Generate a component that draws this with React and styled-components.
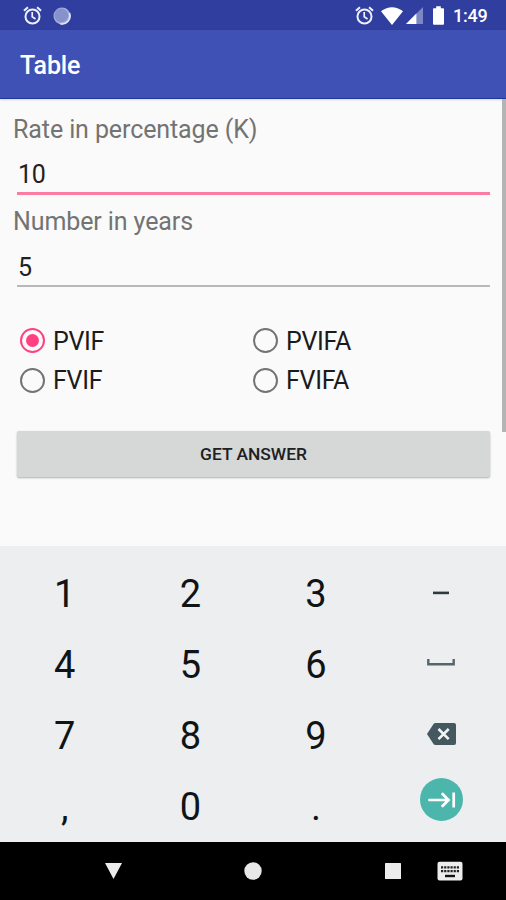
import React, { useState } from 'react';
import styled, { createGlobalStyle } from 'styled-components';

// --- STYLES ---

const GlobalStyle = createGlobalStyle`
  * { box-sizing: border-box; }

  body {
    margin: 0;
    background: #fafafa;
    font-family: Roboto, "Liberation Sans", sans-serif;
  }

  svg { display: block; flex: none; }
`;

const Screen = styled.div`
  width: 506px;
  height: 900px;
  display: flex;
  flex-direction: column;
  overflow: hidden;
  background: #fafafa;
`;

const StatusBar = styled.header`
  height: 30px;
  flex: none;
  display: flex;
  align-items: center;
  justify-content: space-between;
  padding: 1px 18px 0 23px;
  background: #303f9f;
`;

const StatusGroup = styled.div`
  display: flex;
  align-items: center;
`;

const StatusIcon = styled.span`
  margin-right: ${props => props.$space}px;
`;

const Clock = styled.span`
  width: 35px;
  font-size: 18px;
  line-height: 30px;
  letter-spacing: -0.2px;
  font-weight: 500;
  color: #fff;
  white-space: nowrap;
`;

const AppBar = styled.div`
  height: 69px;
  flex: none;
  display: flex;
  align-items: center;
  padding: 4px 20px 0;
  background: #3f51b5;
  border-bottom: 1px solid #1c389f;
  box-shadow: 0 1px 2px rgba(0, 0, 0, 0.15);
`;

const Title = styled.h1`
  margin: 0;
  font-size: 25px;
  line-height: 30px;
  letter-spacing: -0.1px;
  font-weight: 500;
  color: #fff;
`;

const Content = styled.main`
  height: 447px;
  flex: none;
  display: flex;
  align-items: flex-start;
`;

const Form = styled.form`
  width: 502px;
  padding: 16px 12px 0 13px;
`;

const ScrollThumb = styled.div`
  width: 4px;
  height: 333px;
  background: #b4b4b4;
`;

const Field = styled.label`
  display: block;
  height: ${props => props.$height}px;
`;

const FieldName = styled.span`
  display: block;
  font-size: 25px;
  line-height: 30px;
  letter-spacing: -0.1px;
  color: #737373;
`;

const Input = styled.input`
  display: block;
  width: 473px;
  height: 50px;
  margin-left: 4px;
  padding: 12px 1px 0;
  border: 0;
  border-bottom: ${props => (props.$active ? '3px solid #fb7ba2' : '2px solid #b9b9b9')};
  outline: 0;
  background: transparent;
  font-family: inherit;
  font-size: 25px;
  letter-spacing: -0.2px;
  color: #212121;
`;

const RadioGrid = styled.div`
  display: grid;
  grid-template-columns: 233px 233px;
  grid-auto-rows: 39.5px;
  margin: 22px 0 0 7px;
`;

const RadioOption = styled.div`
  display: flex;
  align-items: center;
  gap: 8px;
  font-size: 25px;
  line-height: 30px;
  letter-spacing: -0.3px;
  color: #1b1b1b;
  cursor: pointer;
`;

const RadioLabel = styled.span`
  padding-top: 2px;
`;

const RadioRing = styled.span`
  width: 25px;
  height: 25px;
  display: grid;
  place-items: center;
  border: 2px solid ${props => (props.$checked ? '#ff4081' : '#737373')};
  border-radius: 50%;

  &::after {
    content: '';
    width: 13px;
    height: 13px;
    border-radius: 50%;
    background: ${props => (props.$checked ? '#ff4081' : 'transparent')};
  }
`;

const AnswerButton = styled.button`
  display: block;
  width: 473px;
  height: 46px;
  margin: 31px 0 0 4px;
  padding: 0;
  border: 0;
  border-radius: 2px;
  background: #d6d7d7;
  box-shadow: 0 1px 2px rgba(0, 0, 0, 0.3);
  font-family: inherit;
  font-size: 17.4px;
  font-weight: 500;
  color: #202020;
`;

const Keyboard = styled.section`
  height: 296px;
  flex: none;
  display: grid;
  grid-template-columns: repeat(4, 125.6px);
  grid-auto-rows: 71.2px;
  padding: 12px 0 0 2px;
  background: #eceef0;
`;

const Key = styled.button`
  display: flex;
  align-items: center;
  justify-content: center;
  padding: 0;
  border: 0;
  background: transparent;
  font-family: inherit;
  font-size: 38px;
  line-height: 44px;
  color: #0f1517;
`;

const IconKey = styled(Key)`
  align-items: flex-start;
  padding-right: 1px;
  padding-top: ${props => props.$top}px;
`;

const NavBar = styled.nav`
  height: 58px;
  flex: none;
  display: grid;
  grid-template-columns: 100px 26px 114px 26px 114px 26px 31px 26px;
  align-items: center;
  justify-items: center;
  background: #000;
`;

const NavItem = styled.div`
  grid-column: ${props => props.$column};
`;

// --- ICONS ---

const AlarmIcon = () => (
  <svg width="19" height="19" viewBox="0 0 20 20" fill="none" stroke="#eef0fb">
    <circle cx="10" cy="11" r="7.4" strokeWidth="2.1" />
    <path d="M1 5 5.2 1.4M19 5 14.8 1.4" strokeWidth="2.2" />
    <path d="M9.7 6.4v5l3.5 2.3" strokeWidth="1.8" />
  </svg>
);

const SyncIcon = () => (
  <svg width="18" height="18" viewBox="0 0 19 19">
    <circle cx="9.5" cy="9.5" r="9" fill="#a5aedb" />
    <circle cx="8.8" cy="8.8" r="7.2" fill="#8791cc" />
    <path d="M17.3 6.4A8.3 8.3 0 0 1 7.6 17.6" fill="none" stroke="#e3e6f6" strokeWidth="1.7" />
  </svg>
);

const WifiIcon = () => (
  <svg width="22" height="18" viewBox="0 0 22 18">
    <path d="M0 4.2Q11-3.6 22 4.2L11 18Z" fill="#fff" />
  </svg>
);

const SignalIcon = () => (
  <svg width="17" height="17" viewBox="0 0 18 18">
    <path d="M0 18 18 0v18Z" fill="#7c87c6" />
    <path d="M0 18 11 7v11Z" fill="#fff" />
  </svg>
);

const BatteryIcon = () => (
  <svg width="11" height="19" viewBox="0 0 12 20">
    <path d="M3.5 0h5v2H11q1 0 1 1v16q0 1-1 1H1q-1 0-1-1V3q0-1 1-1h2.5Z" fill="#fff" />
  </svg>
);

const MinusIcon = () => (
  <svg width="16" height="4" viewBox="0 0 16 4">
    <path d="M0 1.9h16" stroke="#30393c" strokeWidth="2.6" />
  </svg>
);

const SpaceIcon = () => (
  <svg width="28" height="7" viewBox="0 0 28 7">
    <path d="M1.3 0v5.2h25.4V0" fill="none" stroke="#55656c" strokeWidth="2.4" />
  </svg>
);

const BackspaceIcon = () => (
  <svg width="29" height="22" viewBox="0 0 29 22">
    <path d="M8.5 0H27q2 0 2 2v18q0 2-2 2H8.5q-1.2 0-2-1.1L0 11 6.5 1.1Q7.3 0 8.5 0Z" fill="#455860" />
    <path d="m11.5 6 10.2 10.2M21.7 6 11.5 16.2" stroke="#f3f6f7" strokeWidth="2.6" />
  </svg>
);

const NextIcon = () => (
  <svg width="43" height="43" viewBox="0 0 43 43">
    <circle cx="21.5" cy="21.5" r="21.5" fill="#4db6ac" />
    <path d="M8.3 22h19.5M21.8 15.3l6.7 6.7-6.7 6.7M33.7 14.5v15" fill="none" stroke="#fff" strokeWidth="2.7" />
  </svg>
);

const BackIcon = () => (
  <svg width="17" height="16" viewBox="0 0 17 16">
    <path d="M0 0h17L8.5 16Z" fill="#ececec" />
  </svg>
);

const HomeIcon = () => (
  <svg width="18" height="18" viewBox="0 0 18 18">
    <circle cx="9" cy="9" r="8.7" fill="#e8e8e8" />
  </svg>
);

const RecentsIcon = () => (
  <svg width="16" height="16" viewBox="0 0 16 16">
    <rect width="16" height="16" rx="0.5" fill="#ececec" />
  </svg>
);

const KeyboardIcon = () => (
  <svg width="26" height="20" viewBox="0 0 26 20">
    <rect x="0.5" y="0.8" width="25" height="18.7" rx="2" fill="#ececec" />
    <path d="M4 6.3h18M4 10.1h18" stroke="#222" strokeWidth="2.2" strokeDasharray="2.2 0.96" />
    <path d="M8 15h10" stroke="#111" strokeWidth="2.4" />
  </svg>
);

// --- PAGE ---

const tables = ['PVIF', 'PVIFA', 'FVIF', 'FVIFA'];

const keyRows = [
  { digits: ['1', '2', '3'], name: 'minus', icon: <MinusIcon />, top: 33 },
  { digits: ['4', '5', '6'], name: 'space', icon: <SpaceIcon />, top: 30 },
  { digits: ['7', '8', '9'], name: 'backspace', icon: <BackspaceIcon />, top: 23 },
  { digits: [',', '0', '.'], name: 'next', icon: <NextIcon />, top: 6.5 },
];

const App = () => {
  const [rate, setRate] = useState('10');
  const [years, setYears] = useState('5');
  const [table, setTable] = useState('PVIF');

  return (
    <Screen>
      <GlobalStyle />

      <StatusBar>
        <StatusGroup>
          <StatusIcon $space={11}><AlarmIcon /></StatusIcon>
          <SyncIcon />
        </StatusGroup>
        <StatusGroup>
          <StatusIcon $space={7}><AlarmIcon /></StatusIcon>
          <StatusIcon $space={3}><WifiIcon /></StatusIcon>
          <StatusIcon $space={10}><SignalIcon /></StatusIcon>
          <StatusIcon $space={9}><BatteryIcon /></StatusIcon>
          <Clock>1:49</Clock>
        </StatusGroup>
      </StatusBar>

      <AppBar>
        <Title>Table</Title>
      </AppBar>

      <Content>
        <Form onSubmit={e => e.preventDefault()}>
          <Field $height={92}>
            <FieldName>Rate in percentage (K)</FieldName>
            <Input $active value={rate} onChange={e => setRate(e.target.value)} />
          </Field>
          <Field $height={92}>
            <FieldName>Number in years</FieldName>
            <Input value={years} onChange={e => setYears(e.target.value)} />
          </Field>

          <RadioGrid>
            {tables.map(name => (
              <RadioOption key={name} onClick={() => setTable(name)}>
                <RadioRing $checked={table === name} />
                <RadioLabel>{name}</RadioLabel>
              </RadioOption>
            ))}
          </RadioGrid>

          <AnswerButton type="submit">GET ANSWER</AnswerButton>
        </Form>
        <ScrollThumb />
      </Content>

      <Keyboard>
        {keyRows.map(row => (
          <React.Fragment key={row.name}>
            {row.digits.map(digit => (
              <Key key={digit}>{digit}</Key>
            ))}
            <IconKey $top={row.top}>{row.icon}</IconKey>
          </React.Fragment>
        ))}
      </Keyboard>

      <NavBar>
        <NavItem $column={2}><BackIcon /></NavItem>
        <NavItem $column={4}><HomeIcon /></NavItem>
        <NavItem $column={6}><RecentsIcon /></NavItem>
        <NavItem $column={8}><KeyboardIcon /></NavItem>
      </NavBar>
    </Screen>
  );
};

export default App;
